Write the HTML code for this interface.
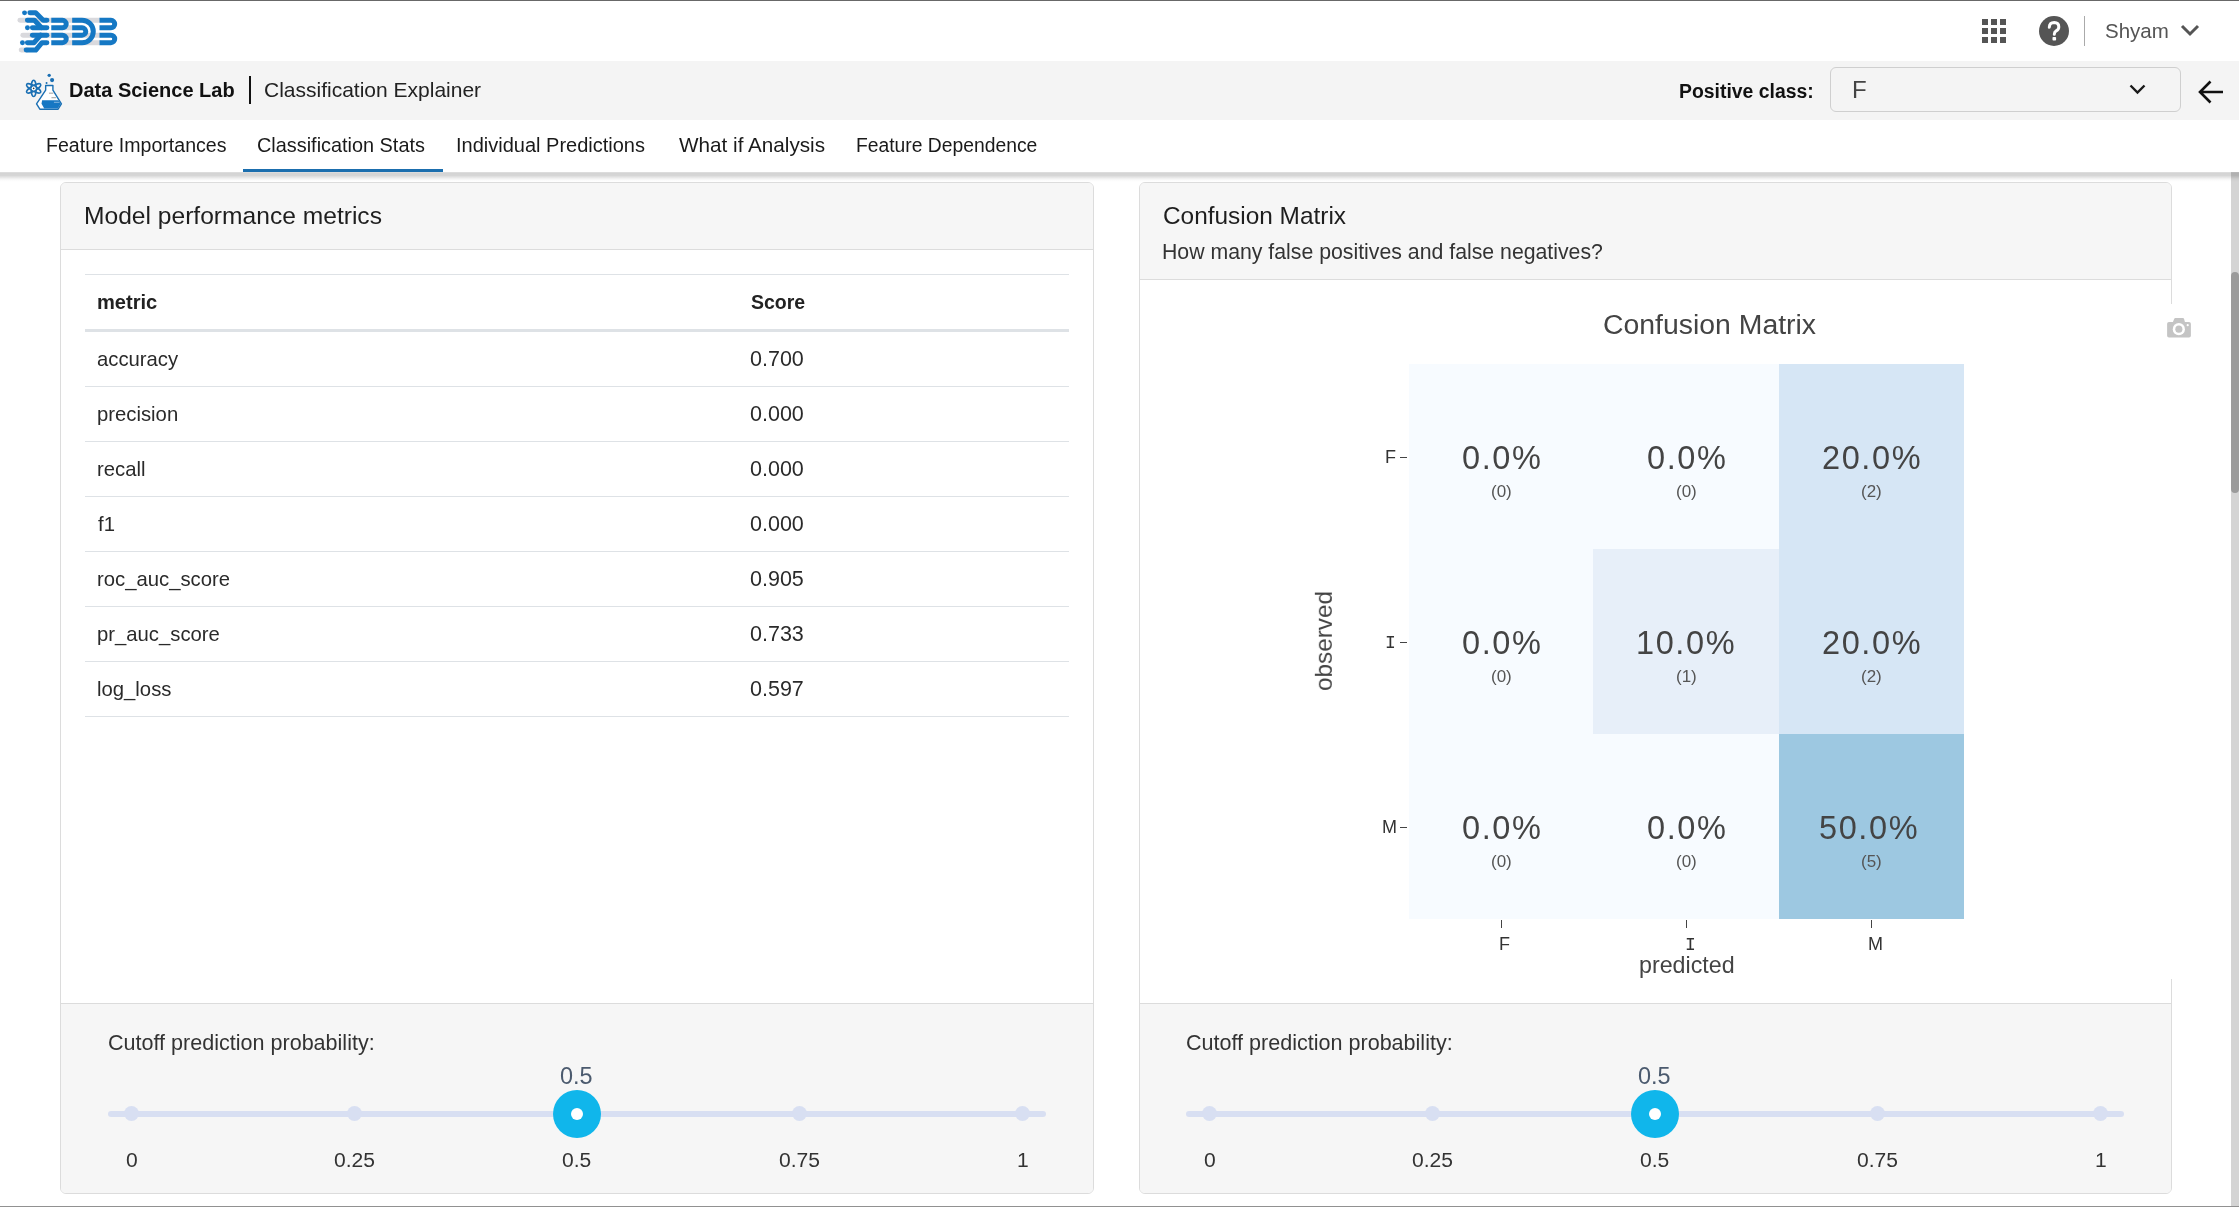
<!DOCTYPE html>
<html><head><meta charset="utf-8"><title>Classification Explainer</title>
<style>
html,body{margin:0;padding:0;width:2239px;height:1207px;overflow:hidden;background:#fff;}
body{position:relative;font-family:"Liberation Sans",sans-serif;}
.r{position:absolute;}
.t{position:absolute;line-height:1;white-space:nowrap;will-change:transform;}
</style></head><body>
<div class="r" style="left:0px;top:0px;width:2239px;height:1px;background:#686868"></div>
<div class="r" style="left:0px;top:1px;width:2239px;height:60px;background:#fff"></div>
<svg class="r" style="left:10px;top:0px" width="120" height="60" viewBox="0 0 2239 1120">
<g stroke="#d9d9dd" stroke-width="93" stroke-linecap="round" fill="none">
<path d="M186 379 H1670"/><path d="M240 657 H1670"/><path d="M1000 797 H1670"/><path d="M1000 519 H1160"/><path d="M209 935 H320"/>
</g>
<g fill="#1578c4"><circle cx="271" cy="240" r="46"/><circle cx="325" cy="519" r="46"/><circle cx="232" cy="797" r="46"/></g>
<g stroke="#1578c4" stroke-width="93" fill="none" stroke-linecap="round" stroke-linejoin="round">
<path d="M371 240 H480 L619 379 H688"/>
<path d="M325 379 H456 L587 519 H688"/><path d="M418 519 H587"/>
<path d="M688 657 H418"/><path d="M572 657 L449 797 H325"/>
<path d="M688 797 H596 L480 935 H302"/>
</g>
<g stroke="#1578c4" stroke-width="93" fill="none">
<path d="M770 379 H979 A70 70 0 0 1 979 519 H770"/>
<path d="M770 657 H979 A70 70 0 0 1 979 797 H770"/>
<path d="M1160 379 H1345 A209 209 0 0 1 1345 797 H1160"/>
<path d="M1160 519 H1345 A69 69 0 0 1 1345 657 H1160"/>
<path d="M1670 379 H1884 A70 70 0 0 1 1884 519 H1670"/>
<path d="M1670 657 H1884 A70 70 0 0 1 1884 797 H1670"/>
</g>
</svg>
<div class="r" style="left:1982px;top:19px;width:6px;height:6px;background:#555"></div>
<div class="r" style="left:1982px;top:28px;width:6px;height:6px;background:#555"></div>
<div class="r" style="left:1982px;top:37px;width:6px;height:6px;background:#555"></div>
<div class="r" style="left:1991px;top:19px;width:6px;height:6px;background:#555"></div>
<div class="r" style="left:1991px;top:28px;width:6px;height:6px;background:#555"></div>
<div class="r" style="left:1991px;top:37px;width:6px;height:6px;background:#555"></div>
<div class="r" style="left:2000px;top:19px;width:6px;height:6px;background:#555"></div>
<div class="r" style="left:2000px;top:28px;width:6px;height:6px;background:#555"></div>
<div class="r" style="left:2000px;top:37px;width:6px;height:6px;background:#555"></div>
<svg class="r" style="left:2039px;top:16px" width="30" height="30" viewBox="0 0 30 30">
<circle cx="15" cy="15" r="15" fill="#555"/>
<path d="M10.3 11.2 Q10.5 6.6 15.2 6.6 Q19.8 6.8 19.8 10.9 Q19.8 13.4 17.2 14.9 Q15.3 16 15.3 18.2" stroke="#fff" stroke-width="3" fill="none" stroke-linecap="round"/>
<rect x="13.5" y="21" width="3.6" height="3.6" rx="0.8" fill="#fff"/>
</svg>
<div class="r" style="left:2084px;top:16px;width:1px;height:30px;background:#aaa"></div>
<div class="t" id="t0" style="left:2105.20px;top:21px;font-size:20.5px;color:#555;font-weight:400;font-family:'Liberation Sans';">Shyam</div>
<svg class="r" style="left:2180px;top:24px" width="20" height="13" viewBox="0 0 20 13">
<path d="M2 2 L10 10 L18 2" stroke="#555" stroke-width="3" fill="none"/></svg>
<div class="r" style="left:0px;top:61px;width:2239px;height:59px;background:#f4f4f4"></div>
<svg class="r" style="left:15px;top:65px" width="60" height="50" viewBox="0 0 1448 1207">
<g stroke="#1a6fb3" stroke-width="36" fill="none">
<ellipse cx="450" cy="565" rx="195" ry="62" transform="rotate(30 450 565)"/>
<ellipse cx="450" cy="565" rx="195" ry="62" transform="rotate(90 450 565)"/>
<ellipse cx="450" cy="565" rx="195" ry="62" transform="rotate(150 450 565)"/>
</g>
<circle cx="450" cy="565" r="48" fill="#fff"/>
<circle cx="450" cy="565" r="20" fill="#333"/>
<path d="M740 495 H915 V605 L1120 940 L1040 1068 H600 L520 940 L740 605 Z" fill="#fff" stroke="#1a6fb3" stroke-width="34" stroke-linejoin="round"/>
<path d="M655 850 H1050 L1105 940 L1030 1052 H705 L640 935 Z" fill="#1677c3"/>
<g stroke="#8a8a8a" stroke-width="20"><path d="M820 680 H925"/><path d="M880 790 H990"/></g>
<path d="M940 900 H1070" stroke="#9fc4e4" stroke-width="20"/>
<circle cx="825" cy="250" r="40" fill="#1a6fb3"/><circle cx="895" cy="365" r="50" fill="#1a6fb3"/><circle cx="762" cy="432" r="24" fill="#1a6fb3"/>
</svg>
<div class="t" id="t1" style="left:69.00px;top:80px;font-size:20px;color:#111;font-weight:700;font-family:'Liberation Sans';">Data Science Lab</div>
<div class="r" style="left:249.3px;top:76px;width:1.5px;height:28px;background:#111"></div>
<div class="t" id="t2" style="left:264.00px;top:79px;font-size:21px;color:#222;font-weight:400;font-family:'Liberation Sans';">Classification Explainer</div>
<div class="t" id="t3" style="left:1679.00px;top:82px;font-size:19.4px;color:#111;font-weight:700;font-family:'Liberation Sans';">Positive class:</div>
<div class="r" style="left:1830px;top:67px;width:351px;height:45px;background:#f4f4f4;border:1px solid #cfcfcf;border-radius:6px;box-sizing:border-box"></div>
<div class="t" id="t4" style="left:1852.00px;top:78px;font-size:24px;color:#444;font-weight:300;font-family:'Liberation Sans';">F</div>
<svg class="r" style="left:2128px;top:83px" width="19" height="13" viewBox="0 0 19 13">
<path d="M2.5 2.5 L9.5 9.5 L16.5 2.5" stroke="#1a1a1a" stroke-width="2.4" fill="none"/></svg>
<svg class="r" style="left:2196px;top:78px" width="30" height="28" viewBox="0 0 30 28">
<path d="M27 14 H5 M14.5 3.5 L4 14 L14.5 24.5" stroke="#111" stroke-width="2.6" fill="none"/></svg>
<div class="r" style="left:0px;top:120px;width:2239px;height:52px;background:#fff"></div>
<div class="t" id="t5" style="left:45.60px;top:136px;font-size:19.57px;color:#1a1a1a;font-weight:400;font-family:'Liberation Sans';">Feature Importances</div>
<div class="t" id="t6" style="left:257.00px;top:136px;font-size:19.89px;color:#1a1a1a;font-weight:400;font-family:'Liberation Sans';">Classification Stats</div>
<div class="t" id="t7" style="left:456.00px;top:135px;font-size:20.0px;color:#1a1a1a;font-weight:400;font-family:'Liberation Sans';">Individual Predictions</div>
<div class="t" id="t8" style="left:679.00px;top:135px;font-size:20.69px;color:#1a1a1a;font-weight:400;font-family:'Liberation Sans';">What if Analysis</div>
<div class="t" id="t9" style="left:856.20px;top:136px;font-size:19.31px;color:#1a1a1a;font-weight:400;font-family:'Liberation Sans';">Feature Dependence</div>
<div class="r" style="left:243px;top:169px;width:200px;height:3px;background:#1b6eae"></div>
<div class="r" style="left:2231px;top:172px;width:8px;height:1035px;background:#d4d4d4"></div>
<div class="r" style="left:2231px;top:272px;width:8px;height:221px;background:#9b9b9b;border-radius:4px"></div>
<div class="r" style="left:60px;top:182px;width:1034px;height:1012px;background:#fff;border:1px solid #dcdcdc;border-radius:6px;box-sizing:border-box;overflow:hidden"></div>
<div class="r" style="left:61px;top:183px;width:1032px;height:66px;background:#f6f6f6;border-radius:5px 5px 0 0"></div>
<div class="r" style="left:61px;top:249px;width:1032px;height:1px;background:#dcdcdc"></div>
<div class="t" id="t10" style="left:84.00px;top:204px;font-size:24.6px;color:#1e1e1e;font-weight:400;font-family:'Liberation Sans';">Model performance metrics</div>
<div class="r" style="left:85px;top:274px;width:984px;height:1px;background:#dee2e6"></div>
<div class="t" id="t11" style="left:96.60px;top:292px;font-size:20.09px;color:#222;font-weight:700;font-family:'Liberation Sans';">metric</div>
<div class="t" id="t12" style="left:751.00px;top:293px;font-size:19.5px;color:#222;font-weight:700;font-family:'Liberation Sans';">Score</div>
<div class="r" style="left:85px;top:329px;width:984px;height:3px;background:#dee2e6"></div>
<div class="t" id="t13" style="left:97.40px;top:349px;font-size:20.3px;color:#2a2a2a;font-weight:400;font-family:'Liberation Sans';">accuracy</div>
<div class="t" id="t14" style="left:750.00px;top:349px;font-size:21.5px;color:#2a2a2a;font-weight:400;font-family:'Liberation Sans';">0.700</div>
<div class="r" style="left:85px;top:386px;width:984px;height:1px;background:#dee2e6"></div>
<div class="t" id="t15" style="left:97.40px;top:404px;font-size:20.3px;color:#2a2a2a;font-weight:400;font-family:'Liberation Sans';">precision</div>
<div class="t" id="t16" style="left:750.00px;top:404px;font-size:21.5px;color:#2a2a2a;font-weight:400;font-family:'Liberation Sans';">0.000</div>
<div class="r" style="left:85px;top:441px;width:984px;height:1px;background:#dee2e6"></div>
<div class="t" id="t17" style="left:97.40px;top:459px;font-size:20.3px;color:#2a2a2a;font-weight:400;font-family:'Liberation Sans';">recall</div>
<div class="t" id="t18" style="left:750.00px;top:459px;font-size:21.5px;color:#2a2a2a;font-weight:400;font-family:'Liberation Sans';">0.000</div>
<div class="r" style="left:85px;top:496px;width:984px;height:1px;background:#dee2e6"></div>
<div class="t" id="t19" style="left:98.40px;top:514px;font-size:20.3px;color:#2a2a2a;font-weight:400;font-family:'Liberation Sans';">f1</div>
<div class="t" id="t20" style="left:750.00px;top:514px;font-size:21.5px;color:#2a2a2a;font-weight:400;font-family:'Liberation Sans';">0.000</div>
<div class="r" style="left:85px;top:551px;width:984px;height:1px;background:#dee2e6"></div>
<div class="t" id="t21" style="left:97.40px;top:569px;font-size:20.3px;color:#2a2a2a;font-weight:400;font-family:'Liberation Sans';">roc_auc_score</div>
<div class="t" id="t22" style="left:750.00px;top:569px;font-size:21.5px;color:#2a2a2a;font-weight:400;font-family:'Liberation Sans';">0.905</div>
<div class="r" style="left:85px;top:606px;width:984px;height:1px;background:#dee2e6"></div>
<div class="t" id="t23" style="left:97.40px;top:624px;font-size:20.3px;color:#2a2a2a;font-weight:400;font-family:'Liberation Sans';">pr_auc_score</div>
<div class="t" id="t24" style="left:750.00px;top:624px;font-size:21.5px;color:#2a2a2a;font-weight:400;font-family:'Liberation Sans';">0.733</div>
<div class="r" style="left:85px;top:661px;width:984px;height:1px;background:#dee2e6"></div>
<div class="t" id="t25" style="left:97.40px;top:679px;font-size:20.3px;color:#2a2a2a;font-weight:400;font-family:'Liberation Sans';">log_loss</div>
<div class="t" id="t26" style="left:750.00px;top:679px;font-size:21.5px;color:#2a2a2a;font-weight:400;font-family:'Liberation Sans';">0.597</div>
<div class="r" style="left:85px;top:716px;width:984px;height:1px;background:#dee2e6"></div>
<div class="r" style="left:61px;top:1003px;width:1032px;height:1px;background:#dcdcdc"></div>
<div class="r" style="left:61px;top:1004px;width:1032px;height:189px;background:#f6f6f6;border-radius:0 0 5px 5px"></div>
<div class="r" style="left:1139px;top:182px;width:1033px;height:1012px;background:#fff;border:1px solid #dcdcdc;border-radius:6px;box-sizing:border-box"></div>
<div class="r" style="left:1140px;top:183px;width:1031px;height:96px;background:#f6f6f6;border-radius:5px 5px 0 0"></div>
<div class="r" style="left:1140px;top:279px;width:1031px;height:1px;background:#dcdcdc"></div>
<div class="t" id="t27" style="left:1163.20px;top:204px;font-size:24.4px;color:#1e1e1e;font-weight:400;font-family:'Liberation Sans';">Confusion Matrix</div>
<div class="t" id="t28" style="left:1162.20px;top:242px;font-size:21.27px;color:#333;font-weight:400;font-family:'Liberation Sans';">How many false positives and false negatives?</div>
<div class="r" style="left:1140px;top:1003px;width:1031px;height:1px;background:#dcdcdc"></div>
<div class="r" style="left:1140px;top:1004px;width:1031px;height:189px;background:#f6f6f6;border-radius:0 0 5px 5px"></div>
<div class="r" style="left:2160px;top:304px;width:40px;height:675px;background:#fff"></div>
<svg class="r" style="left:2160px;top:310px" width="40" height="35" viewBox="0 0 1379 1207">
<path d="M310 410 H445 L495 295 Q505 275 530 275 H790 Q815 275 825 295 L860 410 H1000 Q1065 410 1065 475 V890 Q1065 950 1000 950 H310 Q245 950 245 890 V475 Q245 410 310 410 Z" fill="#c4c4c4"/>
<circle cx="650" cy="660" r="210" fill="#fff"/><circle cx="650" cy="660" r="122" fill="#c4c4c4"/>
<circle cx="955" cy="525" r="38" fill="#fff"/></svg>
<div class="t" id="t29" style="left:1603.00px;top:310px;font-size:28.4px;color:#444;font-weight:400;font-family:'Liberation Sans';">Confusion Matrix</div>
<div class="r" style="left:1409px;top:364px;width:184px;height:185px;background:#f7fbff"></div>
<div class="r" style="left:1593px;top:364px;width:186px;height:185px;background:#f7fbff"></div>
<div class="r" style="left:1779px;top:364px;width:185px;height:185px;background:#d6e6f5"></div>
<div class="r" style="left:1409px;top:549px;width:184px;height:185px;background:#f7fbff"></div>
<div class="r" style="left:1593px;top:549px;width:186px;height:185px;background:#e7eff9"></div>
<div class="r" style="left:1779px;top:549px;width:185px;height:185px;background:#d6e6f5"></div>
<div class="r" style="left:1409px;top:734px;width:184px;height:185px;background:#f7fbff"></div>
<div class="r" style="left:1593px;top:734px;width:186px;height:185px;background:#f7fbff"></div>
<div class="r" style="left:1779px;top:734px;width:185px;height:185px;background:#9dc8e1"></div>
<div class="t" id="t30" style="left:1461.50px;top:442px;font-size:32.5px;color:#444;font-weight:400;font-family:'Liberation Sans';letter-spacing:1.6px;">0.0%</div>
<div class="t" id="t31" style="left:1490.50px;top:483px;font-size:17px;color:#555;font-weight:400;font-family:'Liberation Sans';">(0)</div>
<div class="t" id="t32" style="left:1646.50px;top:442px;font-size:32.5px;color:#444;font-weight:400;font-family:'Liberation Sans';letter-spacing:1.6px;">0.0%</div>
<div class="t" id="t33" style="left:1675.50px;top:483px;font-size:17px;color:#555;font-weight:400;font-family:'Liberation Sans';">(0)</div>
<div class="t" id="t34" style="left:1821.50px;top:442px;font-size:32.5px;color:#444;font-weight:400;font-family:'Liberation Sans';letter-spacing:1.6px;">20.0%</div>
<div class="t" id="t35" style="left:1860.50px;top:483px;font-size:17px;color:#555;font-weight:400;font-family:'Liberation Sans';">(2)</div>
<div class="t" id="t36" style="left:1461.50px;top:627px;font-size:32.5px;color:#444;font-weight:400;font-family:'Liberation Sans';letter-spacing:1.6px;">0.0%</div>
<div class="t" id="t37" style="left:1490.50px;top:668px;font-size:17px;color:#555;font-weight:400;font-family:'Liberation Sans';">(0)</div>
<div class="t" id="t38" style="left:1636.00px;top:627px;font-size:32.5px;color:#444;font-weight:400;font-family:'Liberation Sans';letter-spacing:1.6px;">10.0%</div>
<div class="t" id="t39" style="left:1675.50px;top:668px;font-size:17px;color:#555;font-weight:400;font-family:'Liberation Sans';">(1)</div>
<div class="t" id="t40" style="left:1821.50px;top:627px;font-size:32.5px;color:#444;font-weight:400;font-family:'Liberation Sans';letter-spacing:1.6px;">20.0%</div>
<div class="t" id="t41" style="left:1860.50px;top:668px;font-size:17px;color:#555;font-weight:400;font-family:'Liberation Sans';">(2)</div>
<div class="t" id="t42" style="left:1461.50px;top:812px;font-size:32.5px;color:#444;font-weight:400;font-family:'Liberation Sans';letter-spacing:1.6px;">0.0%</div>
<div class="t" id="t43" style="left:1490.50px;top:853px;font-size:17px;color:#555;font-weight:400;font-family:'Liberation Sans';">(0)</div>
<div class="t" id="t44" style="left:1646.50px;top:812px;font-size:32.5px;color:#444;font-weight:400;font-family:'Liberation Sans';letter-spacing:1.6px;">0.0%</div>
<div class="t" id="t45" style="left:1675.50px;top:853px;font-size:17px;color:#555;font-weight:400;font-family:'Liberation Sans';">(0)</div>
<div class="t" id="t46" style="left:1818.50px;top:812px;font-size:32.5px;color:#444;font-weight:400;font-family:'Liberation Sans';letter-spacing:1.6px;">50.0%</div>
<div class="t" id="t47" style="left:1860.50px;top:853px;font-size:17px;color:#555;font-weight:400;font-family:'Liberation Sans';">(5)</div>
<div class="t" id="t48" style="left:1385.00px;top:448px;font-size:18px;color:#333;font-weight:400;font-family:'Liberation Sans';">F</div>
<div class="r" style="left:1400px;top:456.5px;width:7px;height:1px;background:#444"></div>
<div class="r" style="left:1500.5px;top:920px;width:1.5px;height:8px;background:#444"></div>
<div class="t" id="t49" style="left:1499.00px;top:935px;font-size:18px;color:#333;font-weight:400;font-family:'Liberation Sans';">F</div>
<div class="t" id="t50" style="left:1385.00px;top:634px;font-size:18px;color:#333;font-weight:400;font-family:'Liberation Mono';">I</div>
<div class="r" style="left:1400px;top:641.5px;width:7px;height:1px;background:#444"></div>
<div class="r" style="left:1685.5px;top:920px;width:1.5px;height:8px;background:#444"></div>
<div class="t" id="t51" style="left:1684.50px;top:936px;font-size:18px;color:#333;font-weight:400;font-family:'Liberation Mono';">I</div>
<div class="t" id="t52" style="left:1382.00px;top:818px;font-size:18px;color:#333;font-weight:400;font-family:'Liberation Sans';">M</div>
<div class="r" style="left:1400px;top:826.5px;width:7px;height:1px;background:#444"></div>
<div class="r" style="left:1870.5px;top:920px;width:1.5px;height:8px;background:#444"></div>
<div class="t" id="t53" style="left:1867.50px;top:935px;font-size:18px;color:#333;font-weight:400;font-family:'Liberation Sans';">M</div>
<div class="t" id="t54" style="left:1638.50px;top:954px;font-size:23.26px;color:#444;font-weight:400;font-family:'Liberation Sans';">predicted</div>
<div class="t" style="left:1323.5px;top:641px;font-size:24.3px;color:#444;transform:translate(-50%,-50%) rotate(-90deg);line-height:1">observed</div>
<div class="t" id="t55" style="left:107.80px;top:1032px;font-size:21.56px;color:#333;font-weight:400;font-family:'Liberation Sans';">Cutoff prediction probability:</div>
<div class="r" style="left:108px;top:1111px;width:938px;height:6px;background:#d8dff2;border-radius:3px"></div>
<div class="r" style="left:124.30000000000001px;top:1106px;width:15px;height:15px;background:#d8dff2;border-radius:50%"></div>
<div class="r" style="left:346.9px;top:1106px;width:15px;height:15px;background:#d8dff2;border-radius:50%"></div>
<div class="r" style="left:569.5px;top:1106px;width:15px;height:15px;background:#d8dff2;border-radius:50%"></div>
<div class="r" style="left:792.2px;top:1106px;width:15px;height:15px;background:#d8dff2;border-radius:50%"></div>
<div class="r" style="left:1014.8px;top:1106px;width:15px;height:15px;background:#d8dff2;border-radius:50%"></div>
<div class="t" id="t56" style="left:125.60px;top:1149px;font-size:21.06px;color:#333;font-weight:400;font-family:'Liberation Sans';">0</div>
<div class="t" id="t57" style="left:334.30px;top:1149px;font-size:21.06px;color:#333;font-weight:400;font-family:'Liberation Sans';">0.25</div>
<div class="t" id="t58" style="left:562.00px;top:1149px;font-size:21.06px;color:#333;font-weight:400;font-family:'Liberation Sans';">0.5</div>
<div class="t" id="t59" style="left:778.90px;top:1149px;font-size:21.06px;color:#333;font-weight:400;font-family:'Liberation Sans';">0.75</div>
<div class="t" id="t60" style="left:1016.60px;top:1149px;font-size:21.06px;color:#333;font-weight:400;font-family:'Liberation Sans';">1</div>
<div class="r" style="left:553px;top:1090px;width:48px;height:48px;background:#10b6eb;border-radius:50%"></div>
<div class="r" style="left:571px;top:1108px;width:12px;height:12px;background:#fff;border-radius:50%"></div>
<div class="t" id="t61" style="left:559.50px;top:1065px;font-size:23.45px;color:#4b5a6e;font-weight:400;font-family:'Liberation Sans';">0.5</div>
<div class="t" id="t62" style="left:1185.80px;top:1032px;font-size:21.56px;color:#333;font-weight:400;font-family:'Liberation Sans';">Cutoff prediction probability:</div>
<div class="r" style="left:1186px;top:1111px;width:938px;height:6px;background:#d8dff2;border-radius:3px"></div>
<div class="r" style="left:1202.3px;top:1106px;width:15px;height:15px;background:#d8dff2;border-radius:50%"></div>
<div class="r" style="left:1424.9px;top:1106px;width:15px;height:15px;background:#d8dff2;border-radius:50%"></div>
<div class="r" style="left:1647.5px;top:1106px;width:15px;height:15px;background:#d8dff2;border-radius:50%"></div>
<div class="r" style="left:1870.2px;top:1106px;width:15px;height:15px;background:#d8dff2;border-radius:50%"></div>
<div class="r" style="left:2092.8px;top:1106px;width:15px;height:15px;background:#d8dff2;border-radius:50%"></div>
<div class="t" id="t63" style="left:1203.60px;top:1149px;font-size:21.06px;color:#333;font-weight:400;font-family:'Liberation Sans';">0</div>
<div class="t" id="t64" style="left:1412.30px;top:1149px;font-size:21.06px;color:#333;font-weight:400;font-family:'Liberation Sans';">0.25</div>
<div class="t" id="t65" style="left:1640.00px;top:1149px;font-size:21.06px;color:#333;font-weight:400;font-family:'Liberation Sans';">0.5</div>
<div class="t" id="t66" style="left:1856.90px;top:1149px;font-size:21.06px;color:#333;font-weight:400;font-family:'Liberation Sans';">0.75</div>
<div class="t" id="t67" style="left:2094.60px;top:1149px;font-size:21.06px;color:#333;font-weight:400;font-family:'Liberation Sans';">1</div>
<div class="r" style="left:1631px;top:1090px;width:48px;height:48px;background:#10b6eb;border-radius:50%"></div>
<div class="r" style="left:1649px;top:1108px;width:12px;height:12px;background:#fff;border-radius:50%"></div>
<div class="t" id="t68" style="left:1637.50px;top:1065px;font-size:23.45px;color:#4b5a6e;font-weight:400;font-family:'Liberation Sans';">0.5</div>
<div class="r" style="left:0px;top:172px;width:2239px;height:10px;background:linear-gradient(to bottom, rgba(0,0,0,0.12) 0px, rgba(0,0,0,0.17) 1.5px, rgba(0,0,0,0.16) 3.5px, rgba(0,0,0,0.11) 5px, rgba(0,0,0,0.06) 6.5px, rgba(0,0,0,0.02) 8px, rgba(0,0,0,0) 10px)"></div>
<div class="r" style="left:0px;top:1206px;width:2239px;height:1px;background:#919191"></div>
</body></html>
